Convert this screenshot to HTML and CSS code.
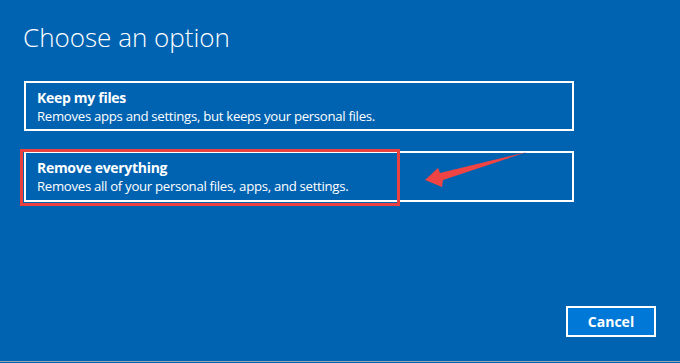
FILE: index.html
```html
<!DOCTYPE html>
<html lang="en">
<head>
    <meta charset="UTF-8">
    <meta name="viewport" content="width=device-width, initial-scale=1.0">
    <title>Choose an option</title>
    <link rel="stylesheet" href="styles.css">
</head>
<body>
    <div class="screen">
        <h1 class="heading">Choose an option</h1>
        <div class="options">
            <div class="option">
                <div class="option-title">Keep my files</div>
                <div class="option-desc">Removes apps and settings, but keeps your personal files.</div>
            </div>
            <div class="option marked">
                <div class="option-title">Remove everything</div>
                <div class="option-desc">Removes all of your personal files, apps, and settings.</div>
                <span class="highlight"></span>
            </div>
        </div>
        <div class="footer">
            <button class="cancel">Cancel</button>
        </div>
        <svg class="arrow" width="680" height="363" viewBox="0 0 680 363">
            <polygon points="425,180 438,168 440,173 527,152 443,180 442,187" fill="#f04444"/>
        </svg>
    </div>
</body>
</html>
```

FILE: styles.css
```css
body {
    margin: 0;
    background: #0063b1;
    font-family: "Open Sans", "Noto Sans", sans-serif;
    color: #fff;
}
.screen {
    position: relative;
    height: 362px;
    border-bottom: 1px solid #9aa3ab;
    display: flex;
    flex-direction: column;
    padding: 0 24px;
    box-sizing: border-box;
}
.heading {
    margin: 19px 0 0 -1px;
    font-size: 26px;
    font-weight: 300;
    line-height: 36px;
}
.options {
    margin-top: 26px;
    display: flex;
    flex-direction: column;
    gap: 20px;
    width: 550px;
}
.option {
    position: relative;
    border: 2px solid #fff;
    height: 50px;
    box-sizing: border-box;
    padding: 5px 11px 0;
}
.marked {
    height: 51px;
}
.option-title {
    font-size: 14px;
    font-weight: 700;
    line-height: 19px;
    letter-spacing: -0.3px;
}
.option-desc {
    font-size: 13.2px;
    line-height: 19px;
    letter-spacing: -0.3px;
}
.highlight {
    position: absolute;
    left: -6px;
    top: -4px;
    width: 380px;
    height: 57px;
    border: 3px solid #e8413f;
    box-sizing: border-box;
}
.footer {
    margin-top: auto;
    margin-bottom: 24px;
    display: flex;
    justify-content: flex-end;
}
.cancel {
    width: 90px;
    height: 31px;
    background: #0078d7;
    border: 2px solid #fff;
    color: #fff;
    font-family: "Open Sans", "Noto Sans", sans-serif;
    font-size: 14px;
    font-weight: 700;
    cursor: pointer;
}
.arrow {
    position: absolute;
    left: 0;
    top: 0;
    pointer-events: none;
}
```
